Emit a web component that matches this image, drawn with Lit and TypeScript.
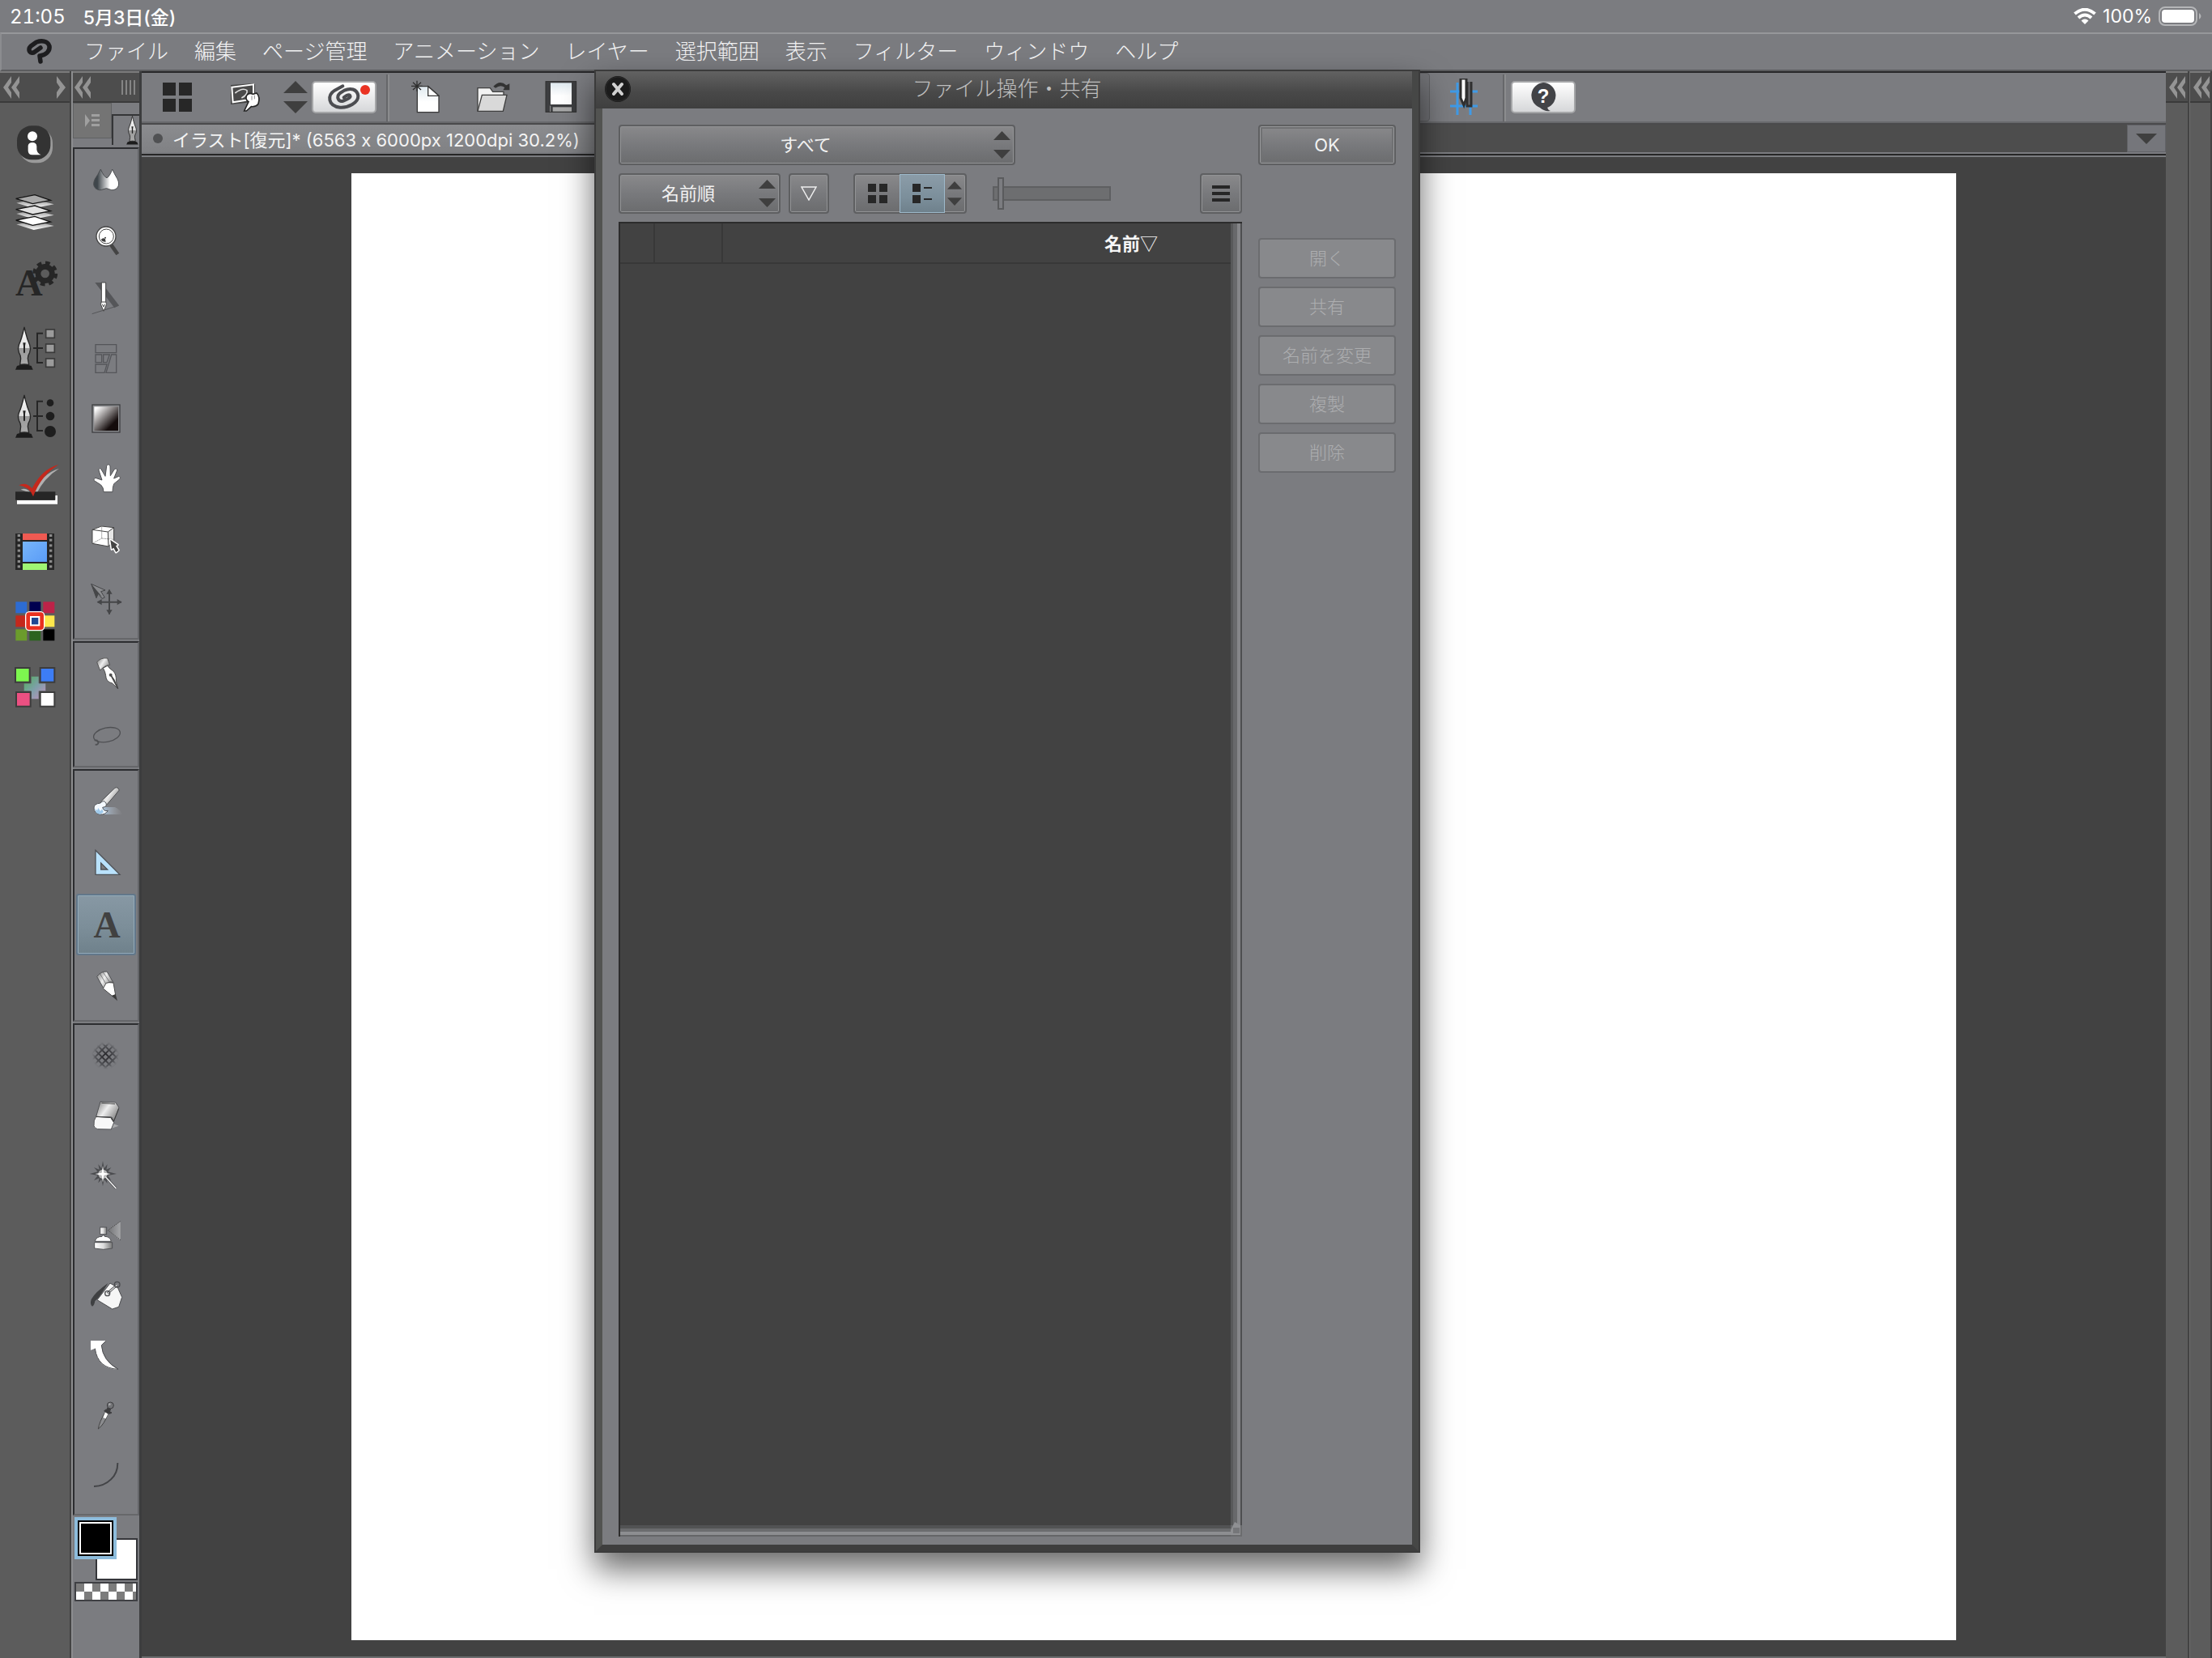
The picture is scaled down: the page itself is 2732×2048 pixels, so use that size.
import { LitElement, html, svg, css, type SVGTemplateResult } from "lit";
import { customElement, property } from "lit/decorators.js";
import { classMap } from "lit/directives/class-map.js";

interface Tool {
  label: string;
  view: string;
  art: SVGTemplateResult;
  selected?: boolean;
}

const menus = ["ファイル", "編集", "ページ管理", "アニメーション", "レイヤー", "選択範囲", "表示", "フィルター", "ウィンドウ", "ヘルプ"];

const penNib = (y: number) => svg`
  <g transform="translate(0 ${y})">
    <path d="M60 50 L66 36 Q93 26 119 36 L125 50Z" fill="#1c1c1c"/>
    <path d="M93 -108 L97 -90 Q104 -62 113 -42 Q118 -28 113 -14 Q106 -2 106 8 L110 32 Q93 28 77 32 L80 8 Q80 -2 73 -14 Q68 -28 73 -42 Q84 -66 93 -108Z" fill="url(#nib)" stroke="#262626" stroke-width="4"/>
    <path d="M88 -50 h10 l-2 12 v24 q-3 6-6 0 v-24z" fill="#222"/>
  </g>`;

const layer = (y: number, fill: string) => svg`
  <path d="M64 ${y + 16} L128 ${y + 2} L203 ${y + 21} L128 ${y + 36}Z" fill="url(#fade)"/>
  <path d="M62 ${y} L132 ${y - 14} L190 ${y + 6} L124 ${y + 19}Z" fill="${fill}" stroke="#151515" stroke-width="4"/>`;

const palettes: Tool[] = [
  { label: "クイックアクセス", view: "36 48 192 192", art: svg`
    <rect x="74" y="84" width="124" height="130" rx="56" fill="#9a9a9a"/>
    <rect x="66" y="76" width="124" height="126" rx="54" fill="#333"/>
    <circle cx="123" cy="115" r="18" fill="#fff"/>
    <path d="M107 150 q2-12 16-12 q15 0 16 14 v12 q2 14 16 20 h-32 q-16 0-16-16z" fill="#fff"/>` },
  { label: "レイヤー", view: "36 300 192 192", art: svg`${layer(346, "#a9a9a9")}${layer(386, "#e2e2e2")}${layer(426, "#fff")}` },
  { label: "ツールプロパティ", view: "36 552 192 192", art: svg`
    <text x="60" y="706" font-family="Liberation Serif" font-weight="700" font-size="140" fill="#262626">A</text>
    <circle cx="170" cy="624" r="26" fill="none" stroke="#262626" stroke-width="20"/>
    <circle cx="170" cy="624" r="40" fill="none" stroke="#262626" stroke-width="13" stroke-dasharray="17 14.4"/>` },
  { label: "サブツール", view: "36 804 192 192", art: svg`
    ${penNib(930)}
    <path d="M162 845 H141 V954 H162 M126 900 H162" fill="none" stroke="#262626" stroke-width="6"/>
    ${[829, 883, 937].map((y) => svg`<rect x="173" y="${y + 2}" width="32" height="31" fill="#9b9b9b" stroke="#3a3a3a" stroke-width="5"/>`)}` },
  { label: "ブラシサイズ", view: "36 -24 192 192", art: svg`
    ${penNib(102)}
    <path d="M162 17 H141 V126 H162 M126 72 H162" fill="none" stroke="#262626" stroke-width="6"/>
    <circle cx="189" cy="23" r="13" fill="#1e1e1e"/><circle cx="189" cy="72" r="16" fill="#1e1e1e"/><circle cx="189" cy="129" r="21" fill="#1e1e1e"/>` },
  { label: "オートアクション", view: "36 228 192 192", art: svg`
    <path d="M66 398 V384 H207 V366 H216 V398Z" fill="#fff"/>
    <path d="M80 344 q24-10 44 20 q30-78 98-98 q-56 34-86 98z" fill="#b0b0b0"/>
    <rect x="60" y="352" width="148" height="31" fill="#262626"/>
    <path d="M73 328 Q100 314 122 340 Q158 268 220 252 Q156 290 126 370 Q112 334 73 328Z" fill="#c4281c"/>` },
  { label: "タイムライン", view: "36 480 192 192", art: svg`
    <rect x="60" y="507" width="144" height="135" fill="#262626"/>
    <rect x="87" y="507" width="90" height="24" fill="#ef5a52"/>
    <rect x="87" y="537" width="90" height="75" fill="url(#sky)"/>
    <rect x="87" y="618" width="90" height="24" fill="#9ff573"/>
    ${[508, 525, 545, 564, 584, 604, 623].map((y) => svg`<rect x="68" y="${y + 2}" width="10" height="9" fill="#8c8c8c"/><rect x="186" y="${y + 2}" width="10" height="9" fill="#8c8c8c"/>`)}` },
  { label: "カラーセット", view: "36 732 192 192", art: svg`
    ${[["#2d6cd2", "#00004f", "#bd2348"], ["#c4281c", "#c4281c", "#fde74c"], ["#6b9c2c", "#2b6420", "#000"]].map((row, r) =>
      row.map((c, i) => svg`<rect x="${61 + i * 51}" y="${760 + r * 51}" width="42" height="42" fill="${c}"/>`))}
    <rect x="98" y="797" width="69" height="69" rx="14" fill="#e8301f" stroke="#fff" stroke-width="4"/>
    <rect x="117" y="816" width="31" height="31" fill="#1d4793" stroke="#fff" stroke-width="6"/>` },
  { label: "カラーミックス", view: "36 984 192 192", art: svg`
    <path d="M118 1036 H147 V1062 H173 V1091 H147 V1121 H118 V1091 H91 V1062 H118Z" fill="url(#mix)" stroke="#5a5a5a" stroke-width="2"/>
    ${[[60, 1005, "#7df74f"], [152, 1005, "#3d7df5"], [63, 1095, "#ec5082"], [152, 1095, "#fff"]].map(([x, y, c]) =>
      svg`<rect x="${x}" y="${y}" width="53" height="53" fill="${c}" stroke="#3c3c3c" stroke-width="6"/>`)}` },
];

const toolGroups: Tool[][] = [
  [
    { label: "色混ぜ", view: "297 177 192 192", art: svg`
      <path d="M373 234 Q362 256 352 270 Q341 292 354 305 Q368 316 384 308 Q394 302 404 308 Q420 316 434 304 Q446 290 434 268 Q424 252 416 234 Q406 262 396 266 Q386 264 373 234Z" fill="url(#drop)" stroke="#4a4d50" stroke-width="3"/>` },
    { label: "虫めがね", view: "297 402 192 192", art: svg`
      <path d="M412 518 L436 552" stroke="#444" stroke-width="14"/>
      <circle cx="393" cy="486" r="36" fill="#fff" stroke="#444" stroke-width="4"/>
      <circle cx="394" cy="486" r="27" fill="#fff" stroke="#444" stroke-width="3"/>
      <path d="M374 498 q8-10 16-2 l2 10 q-12 2-18-8z" fill="#3c3c3c"/><circle cx="390" cy="491" r="3" fill="#3c3c3c"/>` },
    { label: "定規ペン", view: "297 627 192 192", art: svg`
      <path d="M352 660 H376 L441 745 L424 754Z" fill="#555659"/>
      <path d="M341 776 L440 745" stroke="#555659" stroke-width="3"/>
      <path d="M376 660 H392 V732 L395 740 L384 766 L373 740 L376 732Z" fill="#fff" stroke="#444" stroke-width="3"/>
      <path d="M376 732 H392 M379 740 L384 750 L389 740" stroke="#444" stroke-width="3" fill="none"/>` },
    { label: "コマ枠", view: "297 845 192 192", art: svg`
      <g fill="none" stroke="#55565a" stroke-width="4"><path d="M354 886 H431 V916 H354Z M354 923 H377 V952 H354Z M383 923 H406 L396 952 H383Z M413 923 H431 V990 H393Z M354 959 H396 L387 990 H354Z"/></g>` },
    { label: "グラデーション", view: "297 -12 192 192", art: svg`
      <rect x="342" y="30" width="102" height="102" fill="#8b8c8f" stroke="#3f4042" stroke-width="4"/>
      <rect x="349" y="37" width="89" height="89" fill="url(#gradtool)"/>` },
    { label: "手のひら", view: "297 207 192 192", art: svg`
      <path d="M384 350 Q384 334 374 324 L349 308 Q344 300 354 298 L378 306 L366 270 Q366 260 374 264 L390 292 L395 254 Q401 242 408 254 L409 290 L424 266 Q434 260 434 270 L422 300 L440 292 Q450 294 444 302 L422 320 Q417 332 417 350Z" fill="#fff" stroke="#505154" stroke-width="3" stroke-linejoin="round"/>` },
    { label: "オブジェクト操作", view: "297 429 192 192", art: svg`
      <path d="M342 490 L376 476 L422 482 L400 498 L402 552 L342 541Z" fill="#fff"/>
      <path d="M422 482 L421 530 L402 552 L400 498Z" fill="#e6e6e6"/>
      <path d="M342 490 L376 477 L422 482 L400 498Z M342 490 V541 L402 552 L400 498 M422 482 V530 L402 552" fill="none" stroke="#444" stroke-width="3"/>
      <path d="M377 478 V522 L344 540 M377 522 L420 526" fill="none" stroke="#555" stroke-width="2" stroke-dasharray="4 2"/>
      <path d="M409 528 L436 546 L429 550 L439 566 L430 573 L421 557 L414 562Z" fill="#444" stroke="#fff" stroke-width="9" stroke-linejoin="round"/>
      <path d="M409 528 L436 546 L429 550 L439 566 L430 573 L421 557 L414 562Z" fill="#444"/>` },
    { label: "レイヤー移動", view: "297 654 192 192", art: svg`
      <path d="M338 694 L390 717 L374 722 L388 744 L378 748 L364 730 L357 746Z" fill="#8a8b8e" stroke="#454648" stroke-width="3"/>
      <path d="M338 694 L380 744 L364 730 L357 746Z" fill="#454648"/>
      <path d="M405 716 V806 M362 761 H450" stroke="#454648" stroke-width="6"/>
      <path d="M405 713 l11 18 h-22z M405 808 l11-18 h-22z M359 761 l18-11 v22z M452 761 l-18-11 v22z" fill="#454648"/>` },
  ],
  [
    { label: "ペン", view: "57 60 192 192", art: svg`
      <path d="M119 114 Q132 96 158 99 L167 124 Q150 124 131 144Z" fill="url(#metal)" stroke="#555" stroke-width="3"/>
      <path d="M142 136 L158 127 Q168 140 180 147 Q192 160 190 184 L197 212 L176 192 Q152 186 152 164 Q150 148 142 136Z" fill="#fff" stroke="#4a4a4a" stroke-width="3"/>
      <circle cx="170" cy="161" r="6" fill="#555"/><path d="M170 161 L197 212 L182 178Z" fill="#444" stroke="#444" stroke-width="4"/>` },
    { label: "選択範囲", view: "57 288 192 192", art: svg`
      <ellipse cx="156" cy="383" rx="50" ry="26" transform="rotate(-12 156 383)" fill="none" stroke="#4f5053" stroke-width="4"/>
      <path d="M110 404 q12-4 15 8 q-2 9-12 7 M118 402 l6 10" fill="none" stroke="#4f5053" stroke-width="5"/>` },
  ],
  [
    { label: "筆", view: "57 534 192 192", art: svg`
      <path d="M136 651 H186 Q206 660 214 678 H130Z" fill="url(#smear)"/>
      <path d="M134 630 L186 580 Q196 574 202 588 L152 646Z" fill="url(#metal)" stroke="#505154" stroke-width="3"/>
      <path d="M132 636 Q144 622 153 636 Q158 650 140 652 Q144 668 160 664 Q150 680 130 678 Q108 672 108 654 Q108 638 132 636Z" fill="#f4f9ff" stroke="#55585c" stroke-width="3"/>
      <path d="M112 656 l8 8 4-10 8 12 6-8 6 12 -14 8 -14-6z" fill="#9fc9ea"/>` },
    { label: "定規", view: "57 762 192 192", art: svg`
      <path fill-rule="evenodd" d="M114 811 L204 901 H114Z M134 858 V882 H158Z" fill="#b9e2fd" stroke="#4f5256" stroke-width="4"/>` },
    { label: "テキスト", view: "57 986 192 192", selected: true, art: svg`
      <text x="156" y="1129" text-anchor="middle" font-family="Liberation Serif" font-weight="700" font-size="138" fill="#414141">A</text>` },
    { label: "鉛筆", view: "57 1217 192 192", art: svg`
      <path d="M119 1278 Q134 1258 156 1259 L180 1300 Q160 1290 144 1322Z" fill="url(#metal)" stroke="#505154" stroke-width="3"/>
      <path d="M131 1268 L153 1306 M142 1262 L166 1298" stroke="#505154" stroke-width="2"/>
      <path d="M142 1322 L153 1302 L164 1300 L180 1301 L188 1346 L176 1350Z" fill="#fff" stroke="#4a4a4a" stroke-width="3"/>
      <path d="M173 1349 L188 1343 L195 1368Z" fill="#3a3a3a"/>` },
  ],
  [
    { label: "モザイク", view: "57 63 192 192", art: svg`
      <g stroke="url(#mosaic)" stroke-width="6" fill="none">
        <path d="M98 150 L158 210 M98 176 L132 210 M105 131 L184 210 M118 118 L197 197 M131 105 L204 178 M157 105 L204 152 M183 105 L204 126"/>
        <path d="M204 150 L144 210 M204 176 L170 210 M197 131 L118 210 M184 118 L105 197 M171 105 L98 178 M145 105 L98 152"/>
      </g>` },
    { label: "消しゴム", view: "57 284 192 192", art: svg`
      <path d="M160 432 L200 418 L180 410Z" fill="#a8a9ab"/>
      <path d="M132 328 L188 331 L201 350 L182 400 L174 386 L116 384Z" fill="url(#metal)" stroke="#505154" stroke-width="3"/>
      <path d="M116 384 Q106 396 108 418 Q110 428 122 430 L172 431 L182 406 L170 387Z" fill="#f8f8f8" stroke="#505154" stroke-width="3"/>
      <path d="M136 333 L186 337 M116 384 L170 387 L181 402 L200 354" fill="none" stroke="#3d3d3d" stroke-width="3"/>` },
    { label: "自動選択", view: "57 506 192 192", art: svg`
      <path d="M141 548 L146 576 L158 560 L154 580 L172 572 L160 588 L192 596 L160 602 L172 620 L154 612 L158 632 L146 616 L141 642 L136 616 L124 630 L128 612 L108 620 L122 602 L92 596 L122 588 L108 572 L128 580 L124 560 L136 576Z" fill="#4b4c4f"/>
      <path d="M150 606 L190 650" stroke="#505154" stroke-width="9"/><path d="M150 606 L190 650" stroke="#fff" stroke-width="4"/>
      <circle cx="141" cy="597" r="17" fill="#d2d2d2" opacity=".8"/>
      <path d="M141 566 L145 592 L170 596 L145 601 L141 628 L137 601 L112 596 L137 592Z" fill="#fff"/>` },
    { label: "エアブラシ", view: "57 728 192 192", art: svg`
      <path d="M158 807 L206 772 V842Z" fill="url(#spray)"/><path d="M206 772 L160 805 L208 842" fill="none" stroke="#444" stroke-width="3" stroke-dasharray="4 4"/>
      <rect x="131" y="794" width="24" height="26" fill="url(#metalh)" stroke="#505154" stroke-width="3"/>
      <path d="M112 846 Q116 828 138 828 L143 822 L148 828 Q168 828 172 846Z" fill="#fff" stroke="#505154" stroke-width="3"/>
      <path d="M110 850 H176 V872 Q143 880 110 872Z" fill="url(#metalh)" stroke="#505154" stroke-width="3"/>` },
    { label: "塗りつぶし", view: "57 21 192 192", art: svg`
      <path d="M120 134 L168 72 L196 88 L212 124 L200 160 L176 168Z" fill="#f6f6f6" stroke="#4a4b4e" stroke-width="3"/>
      <path d="M160 72 Q112 106 98 132 Q92 152 102 158 Q110 154 112 138 Q128 126 160 72Z" fill="#3f4042"/>
      <path d="M158 110 L194 78" stroke="#4a4b4e" stroke-width="9"/><path d="M158 110 L194 78" stroke="#d8d8d8" stroke-width="4"/>
      <circle cx="194" cy="77" r="10" fill="none" stroke="#4a4b4e" stroke-width="4"/><circle cx="158" cy="110" r="9" fill="none" stroke="#4a4b4e" stroke-width="4"/>` },
    { label: "線修正", view: "57 243 192 192", art: svg`
      <path d="M96 285 H153 L136 302 Q140 360 198 392 Q122 390 112 314 L96 320Z" fill="#fff"/>
      <path d="M153 286 L136 302 Q140 358 198 391 Q122 388 112 314" fill="none" stroke="#4a4b4e" stroke-width="3"/>` },
    { label: "スポイト", view: "57 465 192 192", art: svg`
      <path d="M150 550 L160 556 Q146 596 124 612 Q128 586 150 550Z" fill="#8b8c8f" stroke="#444" stroke-width="3"/>
      <path d="M150 550 L160 557 L152 574 L142 570Z" fill="#fff"/>
      <path d="M152 540 l22 12 -8 4 -20-10z M160 532 l10 6 -6 16 -12-8z" fill="#3c3c3e" stroke="#3c3c3e" stroke-width="3"/>
      <circle cx="169" cy="525" r="12" fill="#737477" stroke="#3c3c3e" stroke-width="3"/><circle cx="166" cy="521" r="4" fill="#a9aaac"/>` },
    { label: "曲線", view: "57 687 192 192", art: svg`
      <path d="M196 738 Q196 778 170 800 Q146 824 108 825" fill="none" stroke="#434447" stroke-width="6"/>` },
  ],
];

const defs = svg`<defs>
  <linearGradient id="nib" x2="0" y2="1"><stop offset="0" stop-color="#fff"/><stop offset=".55" stop-color="#ddd"/><stop offset=".56" stop-color="#999"/><stop offset="1" stop-color="#aaa"/></linearGradient>
  <linearGradient id="fade" x2="0" y2="1"><stop stop-color="#888"/><stop offset="1" stop-color="#fff"/></linearGradient>
  <linearGradient id="sky" x2="1" y2="1"><stop stop-color="#77b5fb"/><stop offset="1" stop-color="#5a9cf6"/></linearGradient>
  <linearGradient id="mix" x2="1" y2="1"><stop stop-color="#4fae57"/><stop offset=".5" stop-color="#7da0a8"/><stop offset="1" stop-color="#c58fc0"/></linearGradient>
  <linearGradient id="drop"><stop offset=".15" stop-color="#3f464b"/><stop offset=".65" stop-color="#fff"/></linearGradient>
  <linearGradient id="gradtool" x2="1" y2="1"><stop offset=".08" stop-color="#fff"/><stop offset=".75" stop-color="#140c0c"/></linearGradient>
  <linearGradient id="metal" x2="1" y2=".6"><stop stop-color="#777"/><stop offset=".5" stop-color="#eee"/><stop offset="1" stop-color="#888"/></linearGradient>
  <linearGradient id="metalh"><stop stop-color="#fff"/><stop offset=".5" stop-color="#ddd"/><stop offset="1" stop-color="#777"/></linearGradient>
  <linearGradient id="smear"><stop stop-color="#a9c9e8"/><stop offset="1" stop-color="#b8b8ba" stop-opacity="0"/></linearGradient>
  <linearGradient id="spray"><stop stop-color="#707174"/><stop offset="1" stop-color="#a5a6a8"/></linearGradient>
  <linearGradient id="paperfill" x2="0" y2="1"><stop stop-color="#dfe9ef"/><stop offset=".6" stop-color="#fff"/></linearGradient>
  <radialGradient id="mosaic" gradientUnits="userSpaceOnUse" cx="151" cy="159" r="54"><stop stop-color="#242428"/><stop offset=".7" stop-color="#55565a"/><stop offset="1" stop-color="#7b7c80" stop-opacity="0"/></radialGradient>
</defs>`;

const icon = (size: number, view: string, art: SVGTemplateResult) =>
  html`<svg width=${size} height=${size} viewBox=${view} aria-hidden="true">${defs}${art}</svg>`;

const chevrons = html`<svg width="21" height="28" viewBox="0 0 21 28" aria-hidden="true"><path d="M10 0 L0 14 L10 28 V20 L6 14 L10 8Z M20 0 L10 14 L20 28 V20 L16 14 L20 8Z" fill="#949494"/></svg>`;

const updown = (w: number, h: number) =>
  html`<svg class="updown" width=${w} height=${h} viewBox="0 0 20 34" preserveAspectRatio="none" aria-hidden="true"><path d="M10 0 L20 11 H0Z M10 34 L20 23 H0Z" fill="#3f3f3f"/></svg>`;

const shared = css`
  * { box-sizing: border-box; }
  svg { display: block; flex: none; }
  button { font: inherit; color: inherit; padding: 0; margin: 0; border: 0; background: none; display: flex; align-items: center; justify-content: center; }
`;

@customElement("file-dialog")
export class FileDialog extends LitElement {
  @property({ type: Array }) actions = ["開く", "共有", "名前を変更", "複製", "削除"];

  static styles = [shared, css`
    :host {
      display: flex; flex-direction: column; color: #f2f2f2; font-size: 22px; line-height: 30px;
      background: #7b7c80; box-shadow: 0 20px 38px rgba(0, 0, 0, .6);
      border-style: solid; border-width: 0 10px 10px;
      border-color: #444 #464746 #3e3e3e #525351; outline: 2px solid #3b3b3b; outline-offset: -2px;
    }
    .title { display: flex; align-items: center; height: 48px; margin-left: -8px; padding-left: 11px; border-top: 2px solid #3f3f3f; border-bottom: 2px solid #3f3f3f; background: linear-gradient(#626262, #484848 60%, #404040); }
    .title h1 { flex: 1; margin: 0 40px 0 0; padding-left: 4px; font-size: 26px; font-weight: 300; text-align: center; color: #bfbfbf; }
    .close { width: 32px; height: 32px; border-radius: 50%; background: #191919; }
    .body { flex: 1; display: flex; gap: 20px; padding: 20px 20px 10px; min-height: 0; }
    .main { flex: 1; display: flex; flex-direction: column; gap: 10px; min-width: 0; }
    .row { display: flex; align-items: center; }
    .ctl { height: 50px; border: 2px solid #5e5f61; border-radius: 4px; background: linear-gradient(#89898b, #77787b 55%, #6b6c6e); box-shadow: inset 0 0 0 1px #929395; }
    .pick { display: grid; align-items: center; }
    .pick > * { grid-area: 1 / 1; }
    .pick svg { justify-self: end; margin-right: 6px; pointer-events: none; }
    select { appearance: none; font: inherit; color: inherit; width: 100%; text-align-last: center; padding: 0 36px 0 8px; }
    .all { width: 490px; }
    .sort { width: 200px; }
    .order { width: 50px; margin-left: 10px; }
    .views { display: flex; margin-left: 30px; }
    .views button { height: 46px; }
    .views .grid { width: 56px; }
    .views .list { width: 54px; background: linear-gradient(#8b9ca8, #7c8f9b 60%, #6f818c); box-shadow: 0 0 0 1px #9db9cb; }
    .views .step { width: 26px; }
    input[type="range"] { appearance: none; width: 146px; height: 40px; margin: 0 0 0 32px; background: none; }
    input::-webkit-slider-runnable-track { height: 18px; border: 2px solid #5e5f61; background: #6d6e70; }
    input::-webkit-slider-thumb { appearance: none; width: 8px; height: 40px; margin: -13px 0 0 4px; border: 2px solid #5a5b5d; background: #7b7c80; }
    .more { width: 52px; margin-left: auto; }
    .files { flex: 1; min-height: 0; display: grid; grid-template: 1fr 14px / 1fr 14px; background: #424242; border: solid #2c2c2c; border-width: 2px 0 0 2px; }
    .scroll-y { background: linear-gradient(90deg, #58595a 3px, #68696b 3px 8px, #858689 8px 12px, #4d4e50 12px); }
    .scroll-x { background: linear-gradient(#525354 4px, #6b6c6e 4px 8px, #8d8e91 8px 12px, #646567 12px); }
    .corner { background: #6b6c6e; }
    .corner svg { margin-top: -4px; }
    table { width: 100%; border-collapse: collapse; table-layout: fixed; align-self: start; }
    th { height: 49px; padding: 0; border-bottom: 2px solid #383838; border-right: 2px solid #383838; }
    th.tick { width: 42px; }
    th.thumb { width: 84px; }
    th.name { border-right: 0; padding-right: 90px; text-align: right; font-weight: 700; color: #f6f6f6; }
    .tri { font-weight: 400; font-family: "Noto Sans CJK JP", sans-serif; }
    .side { width: 170px; display: flex; flex-direction: column; gap: 10px; }
    .ok { margin-bottom: 80px; box-shadow: inset 0 0 0 1px #97989a, inset 0 0 0 3px #707173; }
    .side .ctl:disabled { color: #adaeb0; border-color: #6b6c6f; background: #88898c; box-shadow: none; font-weight: 300; }
  `];

  render() {
    return html`
      <header class="title">
        <button class="close" aria-label="閉じる"><svg width="32" height="32" viewBox="0 0 32 32"><circle cx="16" cy="16" r="15" fill="#1b1b1b" stroke="#2c2c2c"/><path d="M11 10 L21 22 M21 10 L11 22" stroke="#d0d0d0" stroke-width="4" stroke-linecap="round"/></svg></button>
        <h1>ファイル操作・共有</h1>
      </header>
      <div class="body">
        <div class="main">
          <div class="row">
            <div class="pick all"><select class="ctl" aria-label="種類"><option>すべて</option></select>${updown(21, 34)}</div>
          </div>
          <div class="row">
            <div class="pick sort"><select class="ctl" aria-label="並べ替え"><option>名前順</option></select>${updown(21, 34)}</div>
            <button class="ctl order" aria-label="降順"><svg width="20" height="18" viewBox="0 0 20 18"><path d="M1 1 H19 L10 17Z" fill="none" stroke="#eee" stroke-width="1.5"/></svg></button>
            <div class="views ctl">
              <button class="grid" aria-label="グリッド表示"><svg width="24" height="24" viewBox="0 0 24 24"><path d="M0 0h10v10H0z M14 0h10v10H14z M0 14h10v10H0z M14 14h10v10H14z" fill="#272727"/></svg></button>
              <button class="list" aria-label="リスト表示"><svg width="24" height="24" viewBox="0 0 24 24"><path d="M0 0h10v10H0z M14 4h10v2H14z M0 14h10v10H0z M14 18h10v2H14z" fill="#272727"/></svg></button>
              <button class="step" aria-label="表示切替">${updown(18, 30)}</button>
            </div>
            <input type="range" aria-label="サムネイルサイズ" min="0" max="100" value="0">
            <button class="ctl more" aria-label="メニュー"><svg width="22" height="20" viewBox="0 0 22 20"><path d="M0 0h22v4H0z M0 8h22v4H0z M0 16h22v4H0z" fill="#262626"/></svg></button>
          </div>
          <div class="files">
            <table>
              <thead><tr><th class="tick"></th><th class="thumb"></th><th class="name">名前<span class="tri">▽</span></th></tr></thead>
            </table>
            <div class="scroll-y"></div>
            <div class="scroll-x"></div>
            <div class="corner"><svg width="14" height="16" viewBox="0 0 14 16"><path d="M0 10 L5 0 L12 4 V16 H0Z" fill="#8f9093"/><path d="M3 7 H11 V14 H3Z" fill="#757679"/></svg></div>
          </div>
        </div>
        <div class="side">
          <button class="ctl ok">OK</button>
          ${this.actions.map((a) => html`<button class="ctl" disabled>${a}</button>`)}
        </div>
      </div>`;
  }
}

@customElement("app-root")
export class AppRoot extends LitElement {
  static styles = [shared, css`
    :host {
      display: grid; grid-template-rows: 40px 48px 1fr; height: 100vh; min-height: 1900px; position: relative; overflow: hidden;
      background: #7b7c80; color: #f4f4f4; font-family: Inter, "Noto Sans CJK JP", sans-serif; font-size: 22px;
    }
    .status { display: flex; align-items: center; padding: 0 12px; gap: 22px; font-size: 23px; color: #fff; font-weight: 500; }
    .status time { font-size: 24px; font-weight: 400; font-variant-numeric: tabular-nums; }
    .status .right { margin-left: auto; display: flex; align-items: center; gap: 8px; font-weight: 400; }
    .menubar { display: flex; align-items: center; border-top: 2px solid #96979a; border-left: 2px solid #8b8c8f; border-bottom: 2px solid #5b5c5e; padding-left: 28px; }
    .menubar .logo { margin-right: 38px; }
    .menubar nav { display: flex; gap: 32px; font-size: 26px; line-height: 40px; font-weight: 300; }
    .menubar a { color: #f2f2f3; text-decoration: none; white-space: nowrap; }
    .desk { display: grid; grid-template-columns: 88px 87px 1fr 29px 28px; min-height: 0; }
    .dock { display: flex; flex-direction: column; background: #5c5c5c; border-right: 2px solid #434343; min-height: 0; }
    .dock + .dock { border-left: 1px solid #6c6c6c; }
    .head { display: flex; align-items: center; justify-content: space-between; flex: none; height: 39px; padding: 0 4px; background: #4d4d4d; border-top: 2px solid #7a7a7a; border-bottom: 2px solid #3b3b3b; }
    .tools .head { padding-left: 2px; }
    .palettes { display: flex; flex-direction: column; padding-top: 9px; }
    .palettes button { height: 84px; }
    .dock.tools { background: #7b7c80; border-left: 2px solid #8c8d8f; border-right: 3px solid #3c3d3e; }
    .tabs { display: flex; height: 55px; flex: none; }
    .tabs .sub { width: 48px; height: 44px; background: #747474; border: 1px solid #606163; }
    .tabs .pen { flex: 1; margin-top: 14px; height: 38px; border-top: 2px solid #343537; border-left: 2px solid #343537; overflow: hidden; justify-content: flex-end; }
    .group { margin-bottom: 2px; padding: 1px 0 11px; border: 2px solid; border-color: #2c2d30 #646569 #66676a #2c2d30; }
    .group.wide { padding: 0; }
    .group.wide.tall { padding-bottom: 4px; }
    .group button { width: 74px; height: 74px; margin: 0 auto; border-radius: 3px; }
    .group.wide button { height: 76px; }
    .group .selected { background: linear-gradient(#8798a4, #7c8e99 55%, #6f818b); border: 2px solid #62778a; box-shadow: inset 0 0 0 1px #92aab9; }
    .colors { display: grid; grid-template: 52px 26px / 52px 26px; padding: 0 2px; }
    .fore { grid-area: 1 / 1; background: #000; border: 4px solid #8dbcdc; box-shadow: inset 0 0 0 2px #000, inset 0 0 0 4px #fff; z-index: 1; }
    .back { grid-area: 1 / 1 / 3 / 3; margin: 26px 0 0 26px; background: #fff; border: 2px solid #35363a; }
    .clear { height: 24px; width: 78px; margin: 2px; border: 2px solid #3f4044; background: conic-gradient(#fff 25%, #7c7c7c 0 50%, #fff 0 75%, #7c7c7c 0) 0 0 / 20px 20px; }
    .work { display: grid; grid-template-rows: 64px 42px 1fr; min-width: 0; border-bottom: 2px solid #6b6c6e; }
    .command { display: flex; align-items: center; padding-left: 2px; border-top: 2px solid #28282a; border-bottom: 2px solid #68696c; }
    .command button { flex: none; }
    .cell { width: 84px; height: 60px; }
    .cell.narrow { width: 36px; margin-left: 2px; }
    .pill { width: 80px; height: 40px; margin-left: 2px; border: 2px solid #a5a6a8; border-radius: 5px; background: linear-gradient(#fff, #d6d7d9); }
    .pill.ask { margin-left: 6px; }
    .rule { width: 4px; align-self: stretch; margin: 2px 2px 0 12px; border-left: 2px solid #66676a; border-right: 2px solid #8b8c8e; }
    .rule.last { margin: 2px 0 0 6px; }
    .hidden-run { width: 1031px; flex: none; height: 60px; border: 1px solid #606164; border-radius: 4px; background: #727377; }
    .tabbar { display: flex; height: 36px; align-items: stretch; background: #4d4d4d; border-top: 2px solid #4a4a4c; box-shadow: 0 2px #7b7c80, 0 4px #262626; }
    .doc { display: flex; align-items: center; gap: 12px; width: 584px; padding-left: 14px; color: #f4f4f4; text-decoration: none; white-space: nowrap; background: linear-gradient(#8b8c8f, #808184); }
    .dot { width: 12px; height: 12px; border-radius: 50%; background: #505153; flex: none; }
    .down { width: 48px; margin-left: auto; background: #75767b; border: 1px solid #626367; }
    .canvas { display: flex; justify-content: center; padding: 20px 0; background: #424242; min-height: 0; }
    .tabbar { position: relative; }
    .paper { height: 100%; aspect-ratio: 1982 / 1812; background: #fff; }
    .dialog { position: absolute; left: 734px; top: 86px; bottom: 130px; width: 1020px; }
  `];

  private tool(t: Tool) {
    return html`<button class=${classMap({ selected: !!t.selected })} aria-label=${t.label}>${icon(64, t.view, t.art)}</button>`;
  }

  render() {
    return html`
      <header class="status">
        <time>21:05</time><span>5月3日(金)</span>
        <span class="right">
          <svg width="28" height="20" viewBox="0 0 28 20"><g fill="none" stroke="#fff" stroke-width="4"><path d="M1.5 7 Q14 -3.5 26.5 7"/><path d="M6 12 Q14 5 22 12"/></g><path d="M9.5 15.5 Q14 11.5 18.5 15.5 L14 20Z" fill="#fff"/></svg>
          <span>100%</span>
          <svg width="54" height="24" viewBox="0 0 54 24"><rect x="1" y="1" width="46" height="22" rx="7" fill="none" stroke="#b5b6b8" stroke-width="2"/><rect x="4" y="4" width="40" height="16" rx="4" fill="#fff"/><path d="M50 8 Q55 12 50 16Z" fill="#b5b6b8"/></svg>
        </span>
      </header>
      <div class="menubar">
        <svg class="logo" width="36" height="36" viewBox="0 0 36 36"><path d="M20 30 L19 23 C27 22 32 17 31 11 C29 4 21 4 15 6 L8 11 C3 16 8 22 13 18 L20 13" fill="none" stroke="#1d1d1f" stroke-width="5.5" stroke-linecap="round" stroke-linejoin="round"/></svg>
        <nav>${menus.map((m) => html`<a href="#">${m}</a>`)}</nav>
      </div>
      <div class="desk">
        <aside class="dock">
          <div class="head">${chevrons}<svg width="12" height="28" viewBox="0 0 12 28"><path d="M0 0 L11 14 L0 28 V20 L4 14 L0 8Z" fill="#949494"/></svg></div>
          <div class="palettes">${palettes.map((p) => this.tool(p))}</div>
        </aside>
        <aside class="dock tools">
          <div class="head">${chevrons}<svg width="18" height="18" viewBox="0 0 18 18"><path d="M1 0V18M6 0V18M11 0V18M16 0V18" stroke="#858585" stroke-width="2"/></svg></div>
          <div class="tabs">
            <button class="sub" aria-label="ツールメニュー"><svg width="18" height="16" viewBox="0 0 18 16"><path d="M0 0 L6 8 L0 16Z M8 0h10v3H8z M8 6h10v3H8z M8 12h10v3H8z" fill="#a0a0a0"/></svg></button>
            <button class="pen" aria-label="ツール"><svg width="17" height="36" viewBox="62 -110 62 162">${defs}${penNib(0)}</svg></button>
          </div>
          ${toolGroups.map((g, i) => html`<div class=${classMap({ group: true, wide: i === 1 || i === 2, tall: i === 2 })}>${g.map((t) => this.tool(t))}</div>`)}
          <div class="colors"><button class="fore" aria-label="メインカラー"></button><button class="back" aria-label="サブカラー"></button></div>
          <button class="clear" aria-label="透明色"></button>
        </aside>
        <main class="work">
          <div class="command">
            <button class="cell" aria-label="ワークスペース"><svg width="36" height="36" viewBox="0 0 36 36"><path d="M0 0h16v16H0z M20 0h16v16H20z M0 20h16v16H0z M20 20h16v16H20z" fill="#272727"/></svg></button>
            <button class="cell" aria-label="タッチ操作"><svg width="40" height="38" viewBox="280 36 120 114">
              <path d="M286 48 L368 42 L376 46 V110 L286 120Z" fill="#444"/><path d="M290 56 L370 46 V100 L294 112Z" fill="#4a4a4a" stroke="#fff" stroke-width="6"/>
              <path d="M302 78 Q330 56 346 68 Q350 84 326 96" fill="none" stroke="#ddd" stroke-width="5"/>
              <path d="M336 144 L352 110 Q340 104 344 88 Q352 74 368 82 L382 78 Q396 92 388 118 Q380 130 362 128 L344 144Z" fill="#fff" stroke="#262626" stroke-width="5"/><path d="M364 88 V104 M374 86 V100" stroke="#555" stroke-width="2"/></svg></button>
            <button class="cell narrow" aria-label="切り替え"><svg width="30" height="40" viewBox="0 0 30 40"><path d="M15 0 L30 15 H0Z M15 40 L30 25 H0Z" fill="#3f3f3f"/></svg></button>
            <button class="pill" aria-label="CLIP STUDIO"><svg width="64" height="34" viewBox="609 40 192 102"><path d="M700 50 L670 66 C642 84 644 124 690 129 C720 131 758 112 757 86 C753 60 728 56 706 66 L690 76 C674 90 684 112 704 104 C720 98 732 92 726 84 C720 80 712 86 704 92" fill="none" stroke="#4c4d51" stroke-width="12" stroke-linecap="round" stroke-linejoin="round"/><circle cx="783" cy="64" r="18" fill="#ea3323"/></svg></button>
            <span class="rule"></span>
            <button class="cell" aria-label="新規"><svg width="36" height="42" viewBox="82 27 108 126">${defs}<path d="M107 50 H148 L187 85 V146 H107Z" fill="url(#paperfill)" stroke="#3a3a3a" stroke-width="4"/><path d="M147 50 V85 H187Z" fill="#fff" stroke="#3a3a3a" stroke-width="4"/><path d="M106 29 V68 M85 49 H126 M91 35 L121 63 M121 35 L91 63" stroke="#2f2f2f" stroke-width="4"/></svg></button>
            <button class="cell" aria-label="開く"><svg width="42" height="42" viewBox="326 27 126 126"><path d="M332 142 V56 H378 L388 70 H428 V82" fill="#f2f2f2" stroke="#3f3f3f" stroke-width="4"/><path d="M332 142 L348 82 H440 L426 142Z" fill="#d9d9d9" stroke="#3f3f3f" stroke-width="4"/><path d="M390 50 Q414 24 438 46 L450 40 V64 H426 L432 54 Q416 42 398 56Z" fill="#333"/></svg></button>
            <button class="cell" aria-label="保存"><svg width="40" height="42" viewBox="581 27 120 126">${defs}<rect x="584" y="32" width="113" height="113" fill="#3d3e40" stroke="#2e2e2e" stroke-width="3"/><rect x="602" y="37" width="78" height="80" fill="url(#paperfill)"/><rect x="610" y="127" width="70" height="16" fill="#a9a9a9"/><path d="M601 122V144" stroke="#999" stroke-width="3"/></svg></button>
            <span class="hidden-run"></span>
            <button class="cell" aria-label="グリッドにスナップ"><svg width="36" height="46" viewBox="0 0 36 46"><path d="M10 5V45 M26 5V45 M1 16H35 M1 34H35" stroke="#3f9ae6" stroke-width="3"/><path d="M22 4 V34 H27 V4" fill="#6a6b6e" stroke="#303030" stroke-width="3"/><path d="M14 0 H21 V24 L18 33 L14 24Z" fill="#fff" stroke="#303030" stroke-width="3"/></svg></button>
            <span class="rule last"></span>
            <button class="pill ask" aria-label="ヘルプ"><svg width="34" height="36" viewBox="0 0 34 36"><path d="M17 0 A16 16 0 0 1 22 31 Q23 34 26 35 Q18 36 13 31 A16 16 0 0 1 17 0Z" fill="#424347"/><text x="17" y="25" text-anchor="middle" font-family="Liberation Sans" font-size="24" font-weight="700" fill="#fff">?</text></svg></button>
          </div>
          <div class="tabbar">
            <a class="doc" href="#"><span class="dot"></span>イラスト[復元]* (6563 x 6000px 1200dpi 30.2%)</a>
            <button class="down" aria-label="ファイル一覧"><svg width="26" height="13" viewBox="0 0 26 13"><path d="M0 0H26L13 13Z" fill="#3f3f3f"/></svg></button>
          </div>
          <div class="canvas"><div class="paper"></div></div>
        </main>
        <aside class="dock"><div class="head">${chevrons}</div></aside>
        <aside class="dock"><div class="head">${chevrons}</div></aside>
      </div>
      <file-dialog class="dialog"></file-dialog>`;
  }
}
